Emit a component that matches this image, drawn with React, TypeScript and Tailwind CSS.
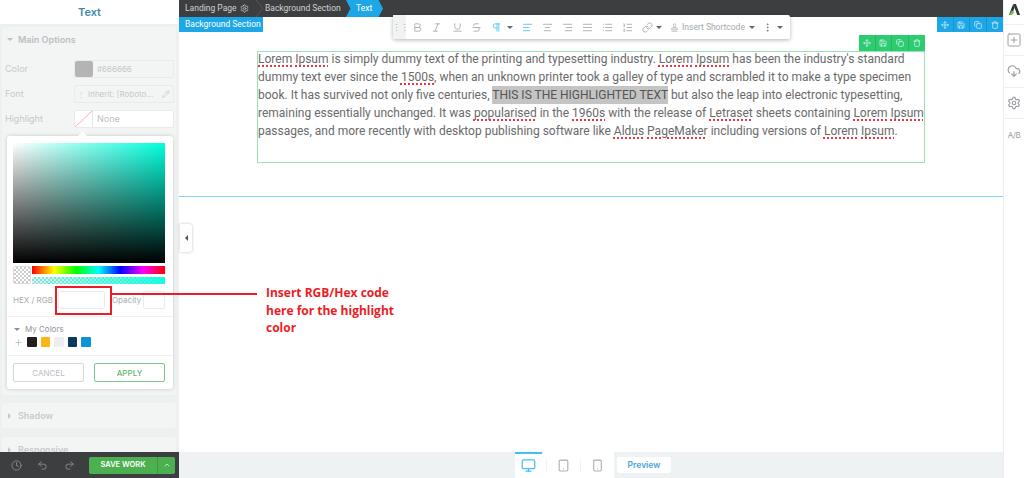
import {
    AlignCenter, AlignJustify, AlignLeft, AlignRight, Bold, Clock, CloudDownload, Copy, Italic, Link, List, ListOrdered,
    Monitor, Move, MoreVertical, Pencil, Pilcrow, Plus, Redo2, Save, Settings, Smartphone, SquarePlus, Strikethrough,
    Tablet, Trash, Underline, Undo2, ChevronUp, Stamp,
} from 'lucide-react';
import type { ReactNode } from 'react';

const Sp = ({ children }: { children: ReactNode }) => (
    <span className="underline decoration-dotted decoration-[#ee3344] decoration-[1.5px] underline-offset-[2px]">{children}</span>
);

const Caret = ({ className = '' }: { className?: string }) => (
    <span className={`w-0 h-0 border-x-[3px] border-x-transparent border-t-[3px] border-t-[#8a8f94] ${className}`} />
);

const ToolGroup = ({ color, divider }: { color: string; divider: string }) => (
    <div className={`flex h-full ${color}`}>
        {[Move, Save, Copy, Trash].map((Icon, i) => (
            <div key={i} className={`w-[16.5px] flex items-center justify-center border-r last:border-r-0 ${divider}`}>
                <Icon size={8} className="text-[#e6f6ff]" />
            </div>
        ))}
    </div>
);

const OptionRow = ({ label, children }: { label: string; children: ReactNode }) => (
    <div className="flex items-center h-[18px] mb-[7px]">
        <span className="w-[69px] text-[9px] text-[#c3c9cc]">{label}</span>
        <div className="flex-1 h-full flex items-center border border-[#e8ebeb] rounded-[2px] overflow-hidden">{children}</div>
    </div>
);

const Panel = ({ title, className = '' }: { title: string; className?: string }) => (
    <div className={`bg-[#f3f5f5] rounded-[3px] h-[25px] flex items-center pl-[6px] gap-[7px] ${className}`}>
        <span className="w-0 h-0 border-y-[3px] border-y-transparent border-l-[3px] border-l-[#c3c8ca]" />
        <span className="text-[9px] font-semibold text-[#c6cbce]">{title}</span>
    </div>
);

const ColorPicker = () => (
    <div className="absolute left-[7px] top-[136px] w-[166px] h-[253px] bg-white rounded-[3px] shadow-[0_0_4px_rgba(0,0,0,0.18)] pl-[6px] pr-[8px] pt-[7px] z-10">
        <div className="absolute left-[72px] top-[-3px] w-[7px] h-[7px] bg-white rotate-45" />
        <div className="h-[120px] bg-[linear-gradient(to_bottom,transparent,#000),linear-gradient(to_right,#fff,#00ffdc)]" />
        <div className="flex gap-[1px] mt-[3px]">
            <div className="w-[18px] h-[18px] rounded-[2px] border border-[#ddd] bg-[repeating-conic-gradient(#ccc_0_25%,#fff_0_50%)] bg-[length:4px_4px]" />
            <div className="flex-1 flex flex-col gap-[3px]">
                <div className="h-[8px] bg-[linear-gradient(to_right,red,yellow,lime,cyan,blue,magenta,red)]" />
                <div className="h-[7px] bg-[linear-gradient(to_right,rgba(0,255,220,0.2),rgba(0,255,220,0.9)),repeating-conic-gradient(#ccc_0_25%,#fff_0_50%)] bg-[length:100%_100%,4px_4px]" />
            </div>
        </div>
        <div className="flex items-center mt-[7px] h-[18px]">
            <span className="w-[45px] text-[8px] text-[#a9aeb2] whitespace-nowrap">HEX / RGB</span>
            <div className="w-[47px] h-full border border-[#e8ebeb] rounded-[2px]" />
            <span className="w-[38px] pl-[7px] text-[8px] text-[#a9aeb2]">Opacity</span>
            <div className="w-[22px] h-full border border-[#e8ebeb] rounded-[2px]" />
        </div>
        <div className="border-t border-[#eff1f1] mt-[7px] -ml-[6px] -mr-[8px] pl-[6px] pt-[7px] h-[39px]">
            <div className="flex items-center gap-[5px] pl-[1px] h-[10px]">
                <Caret />
                <span className="text-[8px] text-[#8f959a]">My Colors</span>
            </div>
            <div className="flex items-center gap-[4px] mt-[3px]">
                <Plus size={9} className="text-[#a9b4bc] ml-[1px]" />
                <div className="w-[9.5px] h-[10px] rounded-[1px] bg-[#231f20]" />
                <div className="w-[9.5px] h-[10px] rounded-[1px] bg-[#fdb515]" />
                <div className="w-[9.5px] h-[10px] rounded-[1px] bg-[#eeeeee]" />
                <div className="w-[9.5px] h-[10px] rounded-[1px] bg-[#0a3a5c]" />
                <div className="w-[9.5px] h-[10px] rounded-[1px] bg-[#0b93d5]" />
            </div>
        </div>
        <div className="border-t border-[#eff1f1] -ml-[6px] -mr-[8px] pl-[6px] pr-[8px] pt-[7px] flex justify-between">
            <button className="w-[71px] h-[19px] border border-[#d4d8da] rounded-[2px] text-[8px] text-[#b9bec2]">CANCEL</button>
            <button className="w-[71px] h-[19px] border border-[#7fc48a] rounded-[2px] text-[8px] font-medium text-[#62b66e]">APPLY</button>
        </div>
    </div>
);

const Sidebar = () => (
    <aside className="relative w-[179px] shrink-0 flex flex-col bg-[#edf0f0]">
        <div className="h-[24px] bg-white flex items-center justify-center text-[11px] font-semibold text-[#3f88a8]">Text</div>
        <div className="flex-1 overflow-hidden pl-[2px] pr-[3px] pt-[3px]">
            <div className="bg-[#f3f5f5] h-[368px] rounded-[3px] pl-[3px] pr-[2px]">
                <div className="flex items-center h-[25px] pl-[2px] gap-[5px] mb-[8px]">
                    <Caret className="border-t-[#b9bec1]" />
                    <span className="text-[9px] font-semibold text-[#b9bfc3]">Main Options</span>
                </div>
                <OptionRow label="Color">
                    <div className="w-[18px] h-full bg-[#b4b4b4] rounded-[2px]" />
                    <span className="pl-[4px] text-[8px] text-[#c3c9cc]">#666666</span>
                </OptionRow>
                <OptionRow label="Font">
                    <span className="pl-[2px] text-[8px] text-[#c3c9cc] flex-1 whitespace-nowrap">⋮<span className="ml-[3px]">Inherit: [Roboto...</span></span>
                    <Pencil size={8} className="text-[#c3c9cc] mr-[3px]" />
                </OptionRow>
                <OptionRow label="Highlight">
                    <div className="bg-white w-full h-full flex items-center">
                        <svg viewBox="0 0 18 18" className="w-[18px] h-full border-r border-[#e3e6e6]" preserveAspectRatio="none">
                            <line x1="0" y1="18" x2="18" y2="0" stroke="#f4a9a9" strokeWidth="1" />
                        </svg>
                        <span className="pl-[4px] text-[9px] text-[#b9bfc3]">None</span>
                    </div>
                </OptionRow>
            </div>
            <Panel title="Shadow" className="mt-[8px]" />
            <Panel title="Responsive" className="mt-[9px]" />
        </div>
        <div className="h-[26px] shrink-0 bg-[#3d3e40] flex items-center pl-[11px] pr-[4px]">
            <Clock size={11} className="text-[#8a8d90]" />
            <Undo2 size={11} className="text-[#8a8d90] ml-[15px]" />
            <Redo2 size={11} className="text-[#8a8d90] ml-[16px]" />
            <div className="ml-auto flex h-[17px] rounded-[2px] overflow-hidden bg-[#4caf50] text-white">
                <span className="w-[69px] flex items-center justify-center text-[7.5px] font-semibold border-r border-[#3f9843]">SAVE WORK</span>
                <span className="w-[17px] flex items-center justify-center"><ChevronUp size={8} /></span>
            </div>
        </div>
        <ColorPicker />
    </aside>
);

const TopBar = () => (
    <div className="h-[17px] shrink-0 bg-[#3d3e40] flex items-center text-[8.5px] text-[#d0d2d3] [font-family:Roboto,sans-serif]">
        <span className="ml-[6px] w-[54px] whitespace-nowrap">Landing Page</span>
        <Settings size={9} className="ml-[1px] text-[#c8cacb]" />
        <svg viewBox="0 0 8 17" className="w-[8px] h-[17px] ml-[7px] text-[#55575a]">
            <polyline points="0,0 7,8.5 0,17" fill="none" stroke="currentColor" strokeWidth="1" />
        </svg>
        <span className="ml-[1px] w-[74px] whitespace-nowrap">Background Section</span>
        <span className="ml-[7px] h-full w-[37px] bg-[#1ea7e6] text-white flex items-center pl-[10px] [clip-path:polygon(0_0,88%_0,100%_50%,88%_100%,0_100%,12%_50%)]">Text</span>
    </div>
);

const FloatingToolbar = () => (
    <div className="absolute left-[214px] top-[-2px] w-[397px] h-[24px] bg-white shadow-[0_1px_4px_rgba(0,0,0,0.3)] rounded-[2px] flex items-center text-[#a9aeb2] z-10">
        <div className="w-[13px] h-full bg-[#f1f3f3] flex items-center justify-center text-[9px] leading-none tracking-[-1px]">⋮⋮</div>
        <Bold size={11} className="ml-[6px]" />
        <Italic size={11} className="ml-[8px]" />
        <Underline size={11} className="ml-[10px]" />
        <Strikethrough size={11} className="ml-[8px]" />
        <Pilcrow size={11} className="ml-[9px] text-[#55c8f0]" />
        <Caret className="ml-[5px] border-t-[#666]" />
        <AlignLeft size={11} className="ml-[9px] text-[#55c8f0]" />
        <AlignCenter size={11} className="ml-[9px]" />
        <AlignRight size={11} className="ml-[9px]" />
        <AlignJustify size={11} className="ml-[9px]" />
        <List size={11} className="ml-[9px]" />
        <ListOrdered size={11} className="ml-[9px]" />
        <Link size={11} className="ml-[9px]" />
        <Caret className="ml-[3px] border-t-[#666]" />
        <Stamp size={9} className="ml-[8px]" />
        <span className="ml-[3px] w-[63px] text-[8.5px] text-[#a4a9ad] whitespace-nowrap [font-family:Roboto,sans-serif]">Insert Shortcode</span>
        <Caret className="ml-[4px] border-t-[#666]" />
        <MoreVertical size={11} className="ml-[7px] text-[#777]" />
        <Caret className="ml-[4px] border-t-[#666]" />
    </div>
);

const TextBlock = () => (
    <div className="relative h-[112px] border border-[#98e2b5] text-[12px] leading-[18px] text-[#6a6a6a] [font-family:Roboto,sans-serif]">
        <p className="-mt-[2px]">
            <Sp>Lorem</Sp> <Sp>Ipsum</Sp> is simply dummy text of the printing and typesetting industry. <Sp>Lorem</Sp> <Sp>Ipsum</Sp> has been the industry's standard dummy text ever since the <Sp>1500s</Sp>, when an unknown printer took a galley of type and scrambled it to make a type specimen book. It has survived not only five centuries, <span className="bg-[#c4c4c4] text-[#555] py-[2px]">THIS IS THE HIGHLIGHTED TEXT</span> but also the leap into electronic typesetting, remaining essentially unchanged. It was <Sp>popularised</Sp> in the <Sp>1960s</Sp> with the release of <Sp>Letraset</Sp> sheets containing <Sp>Lorem</Sp> <Sp>Ipsum</Sp> passages, and more recently with desktop publishing software like <Sp>Aldus</Sp> <Sp>PageMaker</Sp> including versions of <Sp>Lorem</Sp> <Sp>Ipsum</Sp>.
        </p>
    </div>
);

const Canvas = () => (
    <div className="relative flex-1 bg-white">
        <div className="h-[180px] border-b border-[#7fd6ec]">
            <div className="flex justify-between h-[15px]">
                <span className="w-[84px] bg-[#1ea7e6] text-white text-[8.5px] flex items-center pl-[6px] whitespace-nowrap [font-family:Roboto,sans-serif]">Background Section</span>
                <ToolGroup color="bg-[#1ea7e6]" divider="border-[#1794ce]" />
            </div>
            <div className="ml-[78px] mr-[78px] mt-[3px]">
                <div className="flex justify-end h-[16px]">
                    <ToolGroup color="bg-[#2ecc71]" divider="border-[#27b763]" />
                </div>
                <TextBlock />
            </div>
        </div>
        <FloatingToolbar />
        <div className="absolute left-[1px] top-[207px] w-[12px] h-[28px] bg-white rounded-r-[3px] shadow-[0_0_3px_rgba(0,0,0,0.25)] flex items-center justify-center">
            <span className="w-0 h-0 border-y-[3px] border-y-transparent border-r-[3px] border-r-[#555]" />
        </div>
    </div>
);

const BottomBar = () => (
    <div className="h-[26px] shrink-0 bg-[#eff2f2] flex items-stretch pl-[336px]">
        <div className="relative w-[99px] bg-white flex items-center">
            <div className="absolute left-0 top-0 w-[27px] h-[1.5px] bg-[#45c0ee]" />
            <Monitor size={15} className="ml-[6px] text-[#45c0ee]" />
            <div className="w-px h-[12px] ml-[10px] bg-[#f0f2f2]" />
            <Tablet size={13} className="ml-[10px] text-[#a9aeb2]" />
            <div className="w-px h-[12px] ml-[10px] bg-[#f0f2f2]" />
            <Smartphone size={13} className="ml-[10px] text-[#a9aeb2]" />
        </div>
        <div className="ml-[3px] my-[5px] w-[54px] bg-white rounded-[3px] flex items-center justify-center text-[8.5px] font-semibold text-[#45a6d8]">Preview</div>
    </div>
);

const RightRail = () => (
    <aside className="w-[21px] shrink-0 bg-white border-l border-[#eeeeee] flex flex-col">
        {[
            <svg viewBox="0 0 14 14" className="w-[13px] h-[13px]" key="logo">
                <polygon points="5.5,1 8.5,1 13,13 10,13" fill="#2f3437" />
                <polygon points="5.5,1 7,5 4,13 1,13" fill="#2f3437" />
                <polygon points="1,13 4,8 7,10 4,13" fill="#6fbf44" />
            </svg>,
            <SquarePlus size={16} strokeWidth={1.5} className="text-[#9a9ea2]" key="add" />,
            <CloudDownload size={14} className="text-[#9a9ea2]" key="cloud" />,
            <Settings size={14} className="text-[#9a9ea2]" key="gear" />,
            <span className="text-[8px] text-[#9a9ea2] tracking-[-0.5px]" key="ab">A/B</span>,
        ].map((node, i) => (
            <div key={i} className="h-[31.3px] flex items-center justify-center border-b border-[#f0f0f0] last:border-b-0 first:h-[25px] first:pb-[5px]">
                {node}
            </div>
        ))}
    </aside>
);

const Annotation = () => (
    <>
        <div className="absolute left-[55px] top-[286px] w-[57px] h-[29px] border-[2.5px] border-[#ed1c24] z-20" />
        <div className="absolute left-[111px] top-[293px] w-[146px] h-[2px] bg-[#ed1c24] z-20" />
        <div className="absolute left-[266px] top-[284px] w-[150px] text-[12px] leading-[17.5px] font-bold text-[#ed1c24] [font-family:'Open_Sans',sans-serif] z-20">
            Insert RGB/Hex code<br />here for the highlight<br />color
        </div>
    </>
);

export default function App() {
    return (
        <div className="relative w-[1024px] h-[478px] overflow-hidden flex bg-white [font-family:Inter,sans-serif]">
            <Sidebar />
            <main className="flex-1 flex flex-col min-w-0">
                <TopBar />
                <Canvas />
                <BottomBar />
            </main>
            <RightRail />
            <Annotation />
        </div>
    );
}
